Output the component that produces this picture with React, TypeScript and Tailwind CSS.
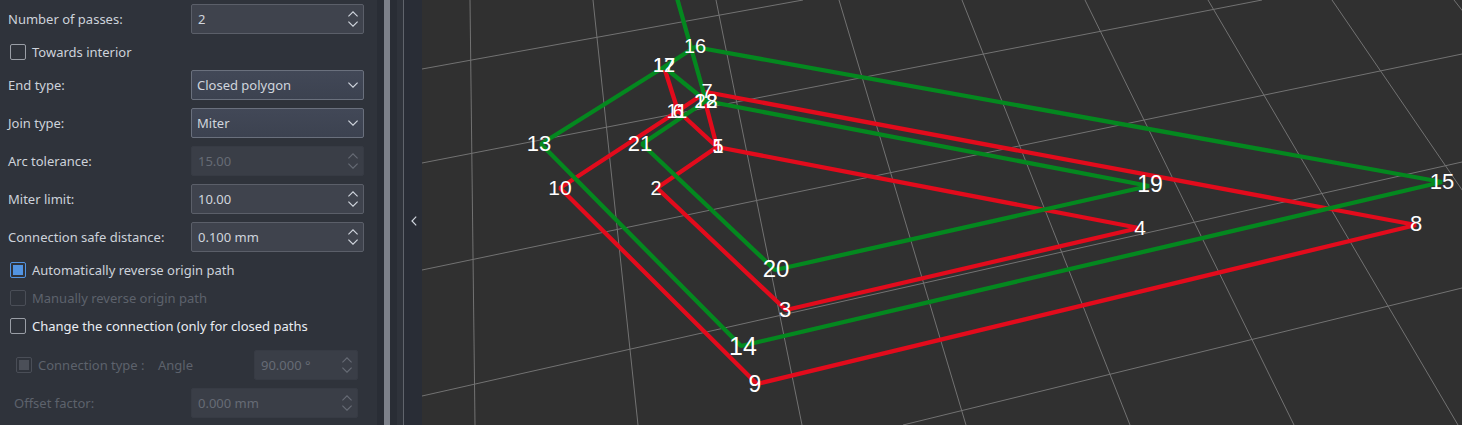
import React, { useState } from 'react';

type Point = [number, number];

const GRID: [Point, Point][] = [
  [[470, 0], [475, 425]],
  [[593, 0], [638, 425]],
  [[716, 0], [802, 425]],
  [[839, 0], [966, 425]],
  [[962, 0], [1130, 425]],
  [[1085, 0], [1294, 425]],
  [[1208, 0], [1458, 425]],
  [[1332, 0], [1623, 425]],
  [[1454, 0], [1787, 425]],
  [[422, 69], [803, 0]],
  [[422, 163], [1262, 0]],
  [[422, 270], [1462, 54]],
  [[422, 396], [1462, 162]],
  [[903, 425], [1462, 288]],
];

const RED_PATHS = [
  '705,101 717,147 657,188 786,310 1139,228 717,147 678,111 706,92 1416,225 757,384 560,188 678,111 664,67',
];

const GREEN_PATHS = [
  '664,67 541,144 741,346 1442,182 695,47 664,67 706,101 1149,186 775,270 642,144 706,101 677,-2',
];

const LABELS: { text: string; x: number; y: number; size: number }[] = [
  { text: '1', x: 718, y: 153, size: 20 },
  { text: '2', x: 656, y: 195, size: 20 },
  { text: '3', x: 785, y: 317, size: 22 },
  { text: '4', x: 1140, y: 235, size: 21 },
  { text: '5', x: 718, y: 153, size: 20 },
  { text: '6', x: 678, y: 118, size: 20 },
  { text: '7', x: 707, y: 98, size: 20 },
  { text: '8', x: 1416, y: 231, size: 22 },
  { text: '9', x: 755, y: 392, size: 23 },
  { text: '10', x: 560, y: 195, size: 21 },
  { text: '11', x: 677, y: 118, size: 20 },
  { text: '12', x: 664, y: 72, size: 20 },
  { text: '13', x: 539, y: 151, size: 22 },
  { text: '14', x: 743, y: 355, size: 25 },
  { text: '15', x: 1442, y: 189, size: 22 },
  { text: '16', x: 695, y: 53, size: 20 },
  { text: '17', x: 664, y: 72, size: 20 },
  { text: '18', x: 706, y: 108, size: 21 },
  { text: '19', x: 1150, y: 192, size: 23 },
  { text: '20', x: 776, y: 277, size: 24 },
  { text: '21', x: 640, y: 151, size: 22 },
  { text: '22', x: 706, y: 108, size: 21 },
];

function Chevron({ up = false }: { up?: boolean }) {
  return (
    <svg
      width="10"
      height="6"
      viewBox="0 0 10 6"
      fill="none"
      stroke="currentColor"
      strokeWidth="1.2"
      className={up ? 'rotate-180' : ''}
      aria-hidden="true"
    >
      <path d="M0.4 0.6 L5 5.1 L9.6 0.6" />
    </svg>
  );
}

function SpinBox({ id, initial, disabled = false }: { id: string; initial: string; disabled?: boolean }) {
  const [value, setValue] = useState(initial);
  const step = (delta: number) => {
    const match = value.match(/^(-?\d+(?:\.(\d+))?)(.*)$/);
    if (!match) return;
    setValue((parseFloat(match[1]) + delta).toFixed(match[2]?.length ?? 0) + match[3]);
  };
  return (
    <div
      className={
        disabled
          ? 'flex h-[30px] min-w-0 flex-1 items-center rounded-xs border border-[#373b44] bg-[#3a3e47] pr-[5px] text-[#666b75]'
          : 'flex h-[30px] min-w-0 flex-1 items-center rounded-xs border border-[#5b5f69] bg-[#3f434d] pr-[5px] text-[#d0d5dd]'
      }
    >
      <input
        id={id}
        type="text"
        value={value}
        disabled={disabled}
        onChange={(e) => setValue(e.target.value)}
        className="h-full w-full min-w-0 flex-1 bg-transparent pl-1.5 outline-none"
      />
      <div className="flex flex-col">
        <button type="button" aria-label="Increase" disabled={disabled} onClick={() => step(1)} className="flex h-[10px] items-center">
          <Chevron up />
        </button>
        <button type="button" aria-label="Decrease" disabled={disabled} onClick={() => step(-1)} className="flex h-[10px] items-center">
          <Chevron />
        </button>
      </div>
    </div>
  );
}

function ComboBox({ id, options }: { id: string; options: string[] }) {
  return (
    <div className="relative flex-1">
      <select
        id={id}
        className="block h-[30px] w-full appearance-none rounded-xs border border-[#6a707d] bg-linear-to-b from-[#424857] to-[#3c4250] pl-[5px] pr-6 text-[#d0d5dd] outline-none"
      >
        {options.map((o) => (
          <option key={o}>{o}</option>
        ))}
      </select>
      <span className="pointer-events-none absolute inset-y-0 right-1.5 flex items-center text-[#d0d5dd]">
        <Chevron />
      </span>
    </div>
  );
}

function Row({ id, label, children }: { id: string; label: string; children: React.ReactNode }) {
  return (
    <div className="flex items-center">
      <label htmlFor={id} className="w-[183px] shrink-0">
        {label}
      </label>
      {children}
    </div>
  );
}

function Check({
  id,
  label,
  checked = false,
  disabled = false,
  bright = false,
}: {
  id: string;
  label: string;
  checked?: boolean;
  disabled?: boolean;
  bright?: boolean;
}) {
  return (
    <div className="flex h-5 items-center gap-1.5 pl-0.5">
      <input
        id={id}
        type="checkbox"
        defaultChecked={checked}
        disabled={disabled}
        className="grid size-4 shrink-0 appearance-none place-items-center rounded-xs border border-[#9a9ea6] before:size-[10px] checked:border-[#5294e2] checked:before:bg-[#5294e2] disabled:border-[#4a4e57] disabled:checked:border-[#4a4e57] disabled:checked:before:bg-[#4b4f58]"
      />
      <label
        htmlFor={id}
        className={
          disabled
            ? 'whitespace-nowrap text-[#5d626c]'
            : bright
              ? 'whitespace-nowrap text-[#e9edf3]'
              : 'whitespace-nowrap'
        }
      >
        {label}
      </label>
    </div>
  );
}

function Viewport() {
  return (
    <svg
      viewBox="422 0 1040 425"
      preserveAspectRatio="xMinYMin slice"
      className="absolute inset-0 h-full w-full"
      role="img"
      aria-label="Tool path preview"
    >
      <g stroke="#727272" strokeWidth="1">
        {GRID.map(([a, b], i) => (
          <line key={i} x1={a[0]} y1={a[1]} x2={b[0]} y2={b[1]} />
        ))}
      </g>
      <g fill="none" strokeWidth="4.3" strokeLinejoin="bevel">
        {RED_PATHS.map((p) => (
          <polyline key={p} points={p} stroke="#e20b1c" />
        ))}
        {GREEN_PATHS.map((p) => (
          <polyline key={p} points={p} stroke="#04881f" />
        ))}
      </g>
      <g fill="#ffffff" textAnchor="middle" fontFamily="'Liberation Sans', Arial, sans-serif">
        {LABELS.map((l) => (
          <text key={l.text} x={l.x} y={l.y} fontSize={l.size}>
            {l.text}
          </text>
        ))}
      </g>
    </svg>
  );
}

export default function App() {
  return (
    <div className="flex min-h-screen bg-[#2f333b] font-['Noto_Sans',sans-serif] text-[13px] leading-5 text-[#cdd2da]">
      <form className="flex w-[377px] shrink-0 flex-col gap-2 pt-1 pr-[13px] pb-[7px] pl-2" onSubmit={(e) => e.preventDefault()}>
        <Row id="passes" label="Number of passes:">
          <SpinBox id="passes" initial="2" />
        </Row>
        <Check id="interior" label="Towards interior" />
        <Row id="end-type" label="End type:">
          <ComboBox id="end-type" options={['Closed polygon', 'Closed line', 'Open butt', 'Open square', 'Open round']} />
        </Row>
        <Row id="join-type" label="Join type:">
          <ComboBox id="join-type" options={['Miter', 'Round', 'Square']} />
        </Row>
        <Row id="arc" label="Arc tolerance:">
          <SpinBox id="arc" initial="15.00" disabled />
        </Row>
        <Row id="miter" label="Miter limit:">
          <SpinBox id="miter" initial="10.00" />
        </Row>
        <Row id="safe" label="Connection safe distance:">
          <SpinBox id="safe" initial="0.100 mm" />
        </Row>
        <Check id="auto-reverse" label="Automatically reverse origin path" checked />
        <Check id="manual-reverse" label="Manually reverse origin path" disabled />
        <Check id="change" label="Change the connection (only for closed paths" bright />
        <div className="mt-1.5 flex flex-col gap-2 px-1.5 text-[#5d626c]">
          <div className="flex items-center">
            <div className="w-36 shrink-0">
              <Check id="connection-type" label="Connection type :" checked disabled />
            </div>
            <label htmlFor="angle" className="w-24 shrink-0">
              Angle
            </label>
            <SpinBox id="angle" initial="90.000 °" disabled />
          </div>
          <div className="flex items-center">
            <label htmlFor="offset" className="w-[177px] shrink-0">
              Offset factor:
            </label>
            <SpinBox id="offset" initial="0.000 mm" disabled />
          </div>
        </div>
      </form>
      <div className="w-5 shrink-0 border-x-[7px] border-[#292d35] bg-[#7d818a]" />
      <div className="w-1.5 shrink-0" />
      <button
        type="button"
        aria-label="Collapse panel"
        className="flex w-[19px] shrink-0 items-center justify-center border-l border-[#60646c] bg-[#292d36] pt-4 pl-0.5 text-[#d0d5dd]"
      >
        <svg width="6" height="10" viewBox="0 0 6 10" fill="none" stroke="currentColor" strokeWidth="1.2" aria-hidden="true">
          <path d="M5.2 0.6 L1 5 L5.2 9.4" />
        </svg>
      </button>
      <main className="relative min-w-0 flex-1 overflow-hidden bg-[#303030]">
        <Viewport />
      </main>
    </div>
  );
}
